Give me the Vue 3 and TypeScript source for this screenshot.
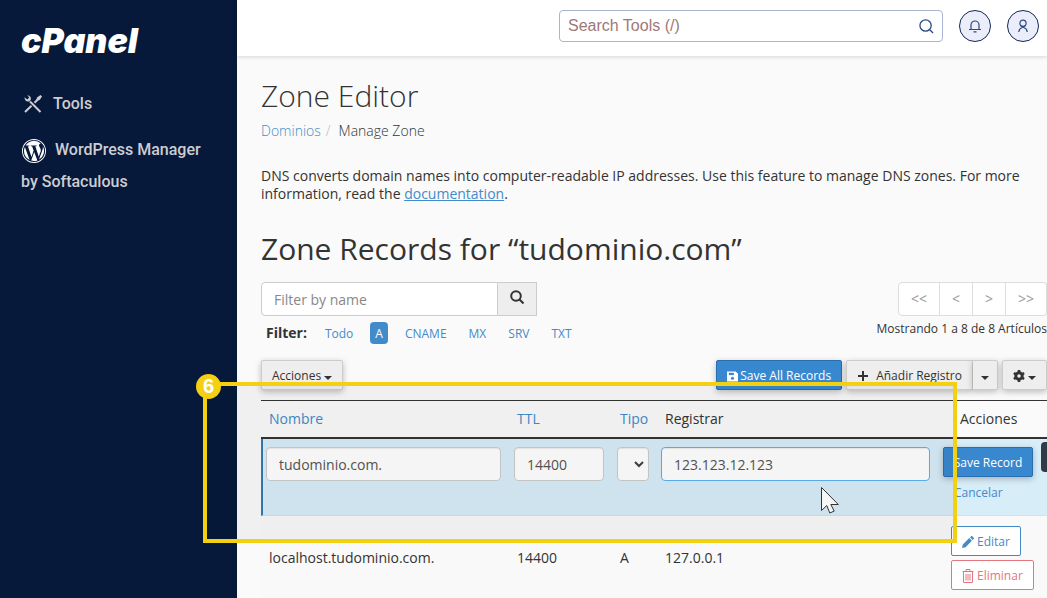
<script setup lang="ts">
import { ref } from 'vue'

const filters: string[] = ['Todo', 'A', 'CNAME', 'MX', 'SRV', 'TXT']
const activeFilter = ref('A')
const pages: string[] = ['<<', '<', '>', '>>']
const search = ref('')
const nameFilter = ref('')
const recordName = ref('tudominio.com.')
const ttl = ref('14400')
const recordType = ref('')
const recordValue = ref('123.123.12.123')
</script>

<template>
  <div class="page">
    <aside class="sidebar">
      <a class="logo" href="#">cPanel</a>
      <nav>
        <a class="nav-item" href="#">
          <svg class="tools-icon" viewBox="0 0 20 20" width="20" height="20" fill="none" stroke="currentColor">
            <path d="M7 7.500 17.500 18" stroke-width="2" />
            <path d="M1.500 3.200c0 3 2 4.800 4.700 4.200l1.600-1.600C8.400 3.500 7 1.300 4.300 1.200l1.900 2.300-1.900 1.900z" fill="currentColor" stroke="none" />
            <path d="M2 18 8.500 11.700M11.500 8.800 14.500 5.800" stroke-width="2" />
            <path d="m13.200 6.200.8-2.700L17.500 1l1.500 1.500-2.400 3.500-2.700.9z" fill="currentColor" stroke="none" />
          </svg>
          <span>Tools</span>
        </a>
        <a class="nav-item wordpress" href="#">
          <svg viewBox="0 0 24 24" width="24" height="24" fill="#fff">
            <path d="M12 0a12 12 0 1 0 0 24 12 12 0 0 0 0-24zm0 .9a11.100 11.100 0 1 1 0 22.200A11.100 11.100 0 0 1 12 .9z" />
            <path d="M2 12a10 10 0 0 0 5.600 9L2.900 7.900A10 10 0 0 0 2 12zm16.800-.5c0-1.200-.4-2.100-.8-2.800-.5-.8-1-1.500-1-2.400 0-.9.7-1.800 1.700-1.800h.1A10 10 0 0 0 3.600 6.500h.7c1 0 2.700-.1 2.700-.1.5 0 .6.7.1.8l-1.200.1 3.600 10.600 2.100-6.400-1.500-4.200-1-.1c-.5 0-.5-.8 0-.8 0 0 1.600.1 2.600.1s2.700-.1 2.700-.1c.5 0 .6.7.1.8l-1.200.1 3.500 10.500 1-3.200c.5-1.300 1-2.200 1-3.100zm-6.600 1.400-3 8.700a10 10 0 0 0 6.200-.2l-.1-.1zm8.600-5.700c0 .3.100.7.100 1.100 0 1.100-.2 2.300-.8 3.800L17 20.600a10 10 0 0 0 3.800-13.400z" />
          </svg>
          <span class="wp-label">WordPress Manager</span> by Softaculous
        </a>
      </nav>
    </aside>

    <main class="main">
      <header class="topbar">
        <div class="tool-search">
          <input v-model="search" type="text" placeholder="Search Tools (/)" aria-label="Search Tools" />
          <svg viewBox="0 0 16 16" width="15" height="15" fill="none" stroke="#294a80" stroke-width="1.400">
            <circle cx="7" cy="7" r="6" /><path d="m11.400 11.400 3.600 3.600" />
          </svg>
        </div>
        <button class="round" aria-label="Notifications">
          <svg viewBox="0 0 14 14" width="14" height="14" fill="none" stroke="#294a80" stroke-width="1.200">
            <path d="M3 10.500V6a4 4 0 0 1 8 0v4.500M1 10.500h12M5.500 12.800h3" />
          </svg>
        </button>
        <button class="round" aria-label="Account">
          <svg viewBox="0 0 14 14" width="14" height="14" fill="none" stroke="#294a80" stroke-width="1.200">
            <circle cx="7" cy="4.200" r="3.100" /><path d="M2.800 13c.2-2.400 1.400-3.600 3-4.200l3.400-2M11.200 13c-.2-2.400-1.400-3.600-3-4.200l-3.400-2" />
          </svg>
        </button>
      </header>

      <section class="content">
        <h1>Zone Editor</h1>
        <div class="breadcrumb"><a href="#">Dominios</a><span class="slash">/</span><span>Manage Zone</span></div>
        <p class="intro">
          DNS converts domain names into computer-readable IP addresses. Use this feature to manage DNS zones. For more
          information, read the <a href="#">documentation</a>.
        </p>
        <h2>Zone Records for “tudominio.com”</h2>

        <div class="row">
          <div>
            <div class="name-filter">
              <input v-model="nameFilter" type="text" placeholder="Filter by name" aria-label="Filter by name" />
              <button aria-label="Search">
                <svg viewBox="0 0 14 14" width="14" height="14" fill="none" stroke="#333" stroke-width="2">
                  <circle cx="6" cy="6" r="4.800" /><path d="m9.500 9.500 4 4" />
                </svg>
              </button>
            </div>
            <div class="filters">
              <strong>Filter:</strong>
              <button
                v-for="f in filters"
                :key="f"
                :class="{ active: f === activeFilter }"
                @click="activeFilter = f"
              >{{ f }}</button>
            </div>
          </div>
          <div class="paging">
            <div class="pages"><button v-for="p in pages" :key="p">{{ p }}</button></div>
            <div class="count">Mostrando 1 a 8 de 8 Artículos</div>
          </div>
        </div>

        <div class="row toolbar">
          <button class="btn">Acciones<i class="caret"></i></button>
          <div class="group">
            <button class="btn primary">
              <svg viewBox="0 0 12 12" width="11" height="12">
                <path d="M0 1h9.500L12 3.500V12H0z" fill="#fff" /><path d="M2 2.500h5.500V5H2z" fill="#3888cf" /><circle cx="6" cy="8.500" r="1.700" fill="#3888cf" />
              </svg>Save All Records
            </button>
            <div class="split">
              <button class="btn add">
                <svg viewBox="0 0 12 12" width="12" height="12" stroke="#333" stroke-width="2"><path d="M6 1v10M1 6h10" /></svg>Añadir Registro
              </button>
              <button class="btn drop" aria-label="Más opciones"><i class="caret"></i></button>
            </div>
            <button class="btn gear" aria-label="Configuración">
              <svg viewBox="0 0 14 14" width="12" height="12">
                <circle cx="7" cy="7" r="3.800" fill="none" stroke="#333" stroke-width="3.400" />
                <path d="M7 0v3M7 11v3M1 3.500l2.600 1.500M10.400 9l2.600 1.500M1 10.500 3.600 9M10.400 5 13 3.500" stroke="#333" stroke-width="3" />
              </svg><i class="caret"></i>
            </button>
          </div>
        </div>

        <table>
          <colgroup><col class="c-name" /><col class="c-ttl" /><col class="c-type" /><col /><col class="c-act" /></colgroup>
          <thead>
            <tr>
              <th><a href="#">Nombre</a></th><th><a href="#">TTL</a></th><th><a href="#">Tipo</a></th>
              <th>Registrar</th><th class="act">Acciones</th>
            </tr>
          </thead>
          <tbody>
            <tr class="editing">
              <td><input v-model="recordName" type="text" aria-label="Nombre" /></td>
              <td><input v-model="ttl" type="text" aria-label="TTL" /></td>
              <td>
                <div class="select">
                  <select v-model="recordType" aria-label="Tipo"><option value=""></option><option>A</option></select>
                  <svg viewBox="0 0 10 7" width="10" height="7" fill="none" stroke="#4b3a4b" stroke-width="2"><path d="m1 1 4 4 4-4" /></svg>
                </div>
              </td>
              <td class="value"><input v-model="recordValue" class="focused" type="text" aria-label="Registrar" /></td>
              <td class="save">
                <button class="btn primary">Save Record</button>
                <a href="#">Cancelar</a>
                <span class="tab"></span>
              </td>
            </tr>
            <tr class="record">
              <td>localhost.tudominio.com.</td><td>14400</td><td>A</td><td>127.0.0.1</td>
              <td>
                <button class="line">
                  <svg viewBox="0 0 12 12" width="12" height="12" fill="currentColor"><path d="m0 12 .8-3.600 6.400-6.300 2.700 2.700-6.300 6.400zM8 1.300 9.200.2c.4-.4.8-.2 1.100.1l1.400 1.400c.4.400.4.800 0 1.200L10.700 4z" /></svg>Editar
                </button>
                <button class="line danger">
                  <svg viewBox="0 0 12 14" width="12" height="14" fill="none" stroke="currentColor"><path d="M.5 2.500h11M4 2.500v-2h4v2M1.500 2.500v11h9v-11M4 5v6.500M6 5v6.500M8 5v6.500" /></svg>Eliminar
                </button>
              </td>
            </tr>
          </tbody>
        </table>
      </section>
    </main>

    <div class="highlight"><span class="step">6</span></div>
    <svg class="pointer" viewBox="0 0 20 29" width="20" height="29">
      <path d="M1.500 1.500v23l5.300-5 3 7.500 4.400-1.900-3.400-6.600h7.500z" fill="#f7f7f7" stroke="#333" stroke-width="1" />
    </svg>
  </div>
</template>

<style>
body {
  margin: 0;
  background: #fafafa;
}
</style>

<style scoped>
* {
  box-sizing: border-box;
}
.page {
  position: relative;
  display: flex;
  min-height: 100vh;
  overflow: hidden;
  font: 14px/20px "Open Sans", sans-serif;
  color: #333;
}
button,
input,
select {
  font: inherit;
  color: inherit;
  margin: 0;
}
button {
  white-space: nowrap;
}
a {
  color: #428bca;
  text-decoration: none;
}
.sidebar {
  flex: 0 0 237px;
  background: #06193b;
  padding: 21px 20px 0 21px;
  font: 500 16px/32px Roboto, sans-serif;
}
.logo {
  display: block;
  font: italic 900 34px/40px Inter, sans-serif;
  color: #fff;
}
.nav-item {
  display: flex;
  align-items: center;
  gap: 10px;
  margin-top: 27px;
  color: #cdcdd0;
}
.tools-icon {
  margin-left: 2px;
}
.nav-item.wordpress {
  display: block;
  margin-top: 14px;
}
.wordpress svg {
  margin: 0 1px;
  vertical-align: middle;
}
.wp-label {
  margin-left: 8px;
}
.main {
  flex: 1;
  min-width: 0;
}
.topbar {
  display: flex;
  justify-content: flex-end;
  align-items: center;
  gap: 16px;
  height: 56px;
  padding: 0 8px 4px 0;
  background: #fff;
  box-shadow: 0 1px 4px rgba(0, 0, 0, 0.15);
}
.tool-search {
  display: flex;
  align-items: center;
  width: 384px;
  height: 32px;
  padding: 0 8px;
  border: 1px solid #a9b6cf;
  border-radius: 4px;
}
.tool-search input {
  flex: 1;
  border: 0;
  padding: 0;
  outline: 0;
  background: none;
  font: 16px/24px "Liberation Sans", sans-serif;
}
.tool-search input::placeholder {
  color: #a07878;
}
.round {
  display: flex;
  align-items: center;
  justify-content: center;
  width: 32px;
  height: 32px;
  padding: 0;
  border: 1px solid #142757;
  border-radius: 50%;
  background: #ebedfa;
}
.content {
  padding: 23px 0 0 24px;
}
h1,
h2 {
  margin: 0;
  font-size: 30px;
  line-height: 33px;
  font-weight: 300;
}
.breadcrumb {
  margin-top: 9px;
  font-weight: 300;
}
.slash {
  padding: 0 8px 0 5px;
  color: #bbb;
}
.intro {
  margin: 26px 0 0;
  line-height: 18px;
}
.intro a {
  text-decoration: underline;
}
h2 {
  margin: 29px 0 17px;
  font-weight: 400;
}
.row {
  display: flex;
  justify-content: space-between;
}
.name-filter {
  display: flex;
  width: 276px;
  height: 34px;
}
.name-filter input {
  flex: 1;
  min-width: 0;
  padding: 1px 12px 0;
  border: 1px solid #ccc;
  border-radius: 4px 0 0 4px;
  background: #fff;
}
.name-filter input::placeholder {
  color: #888;
}
.name-filter button {
  width: 39px;
  padding: 0;
  border: 1px solid #ccc;
  border-left: 0;
  background: #eee;
}
.filters {
  display: flex;
  align-items: center;
  height: 34px;
  padding-left: 5px;
}
.filters strong {
  margin-right: 13px;
  font-weight: 700;
}
.filters button {
  height: 22px;
  padding: 2px 5px 0;
  margin-right: 12px;
  border: 0;
  border-radius: 4px;
  background: none;
  font-size: 12px;
  color: #428bca;
}
.filters .active {
  background: #428bca;
  color: #fff;
}
.paging {
  text-align: right;
}
.pages {
  display: flex;
  justify-content: flex-end;
  height: 34px;
}
.pages button {
  padding: 0 12px;
  border: 1px solid #ddd;
  border-left-width: 0;
  background: #fff;
  color: #999;
}
.pages button:first-child {
  border-left-width: 1px;
  border-radius: 4px 0 0 4px;
}
.pages button:last-child {
  border-radius: 0 4px 4px 0;
}
.count {
  margin-top: 3px;
  font-size: 12px;
}
.toolbar {
  margin: 10px 0;
}
.btn {
  display: flex;
  align-items: center;
  height: 30px;
  padding: 2px 10px 0;
  border: 1px solid #ccc;
  border-radius: 2px;
  background: #eee;
  font-size: 12px;
  box-shadow: 0 2px 6px rgba(0, 0, 0, 0.25);
}
.primary {
  border-color: #2a6eb0;
  background: #3888cf;
  color: #fff;
}
.primary svg {
  margin-right: 2px;
}
.group {
  display: flex;
  gap: 4px;
}
.split {
  display: flex;
}
.add {
  border-radius: 2px 0 0 2px;
}
.add svg {
  margin-right: 7px;
}
.drop {
  padding: 2px 8px 0;
  border-left: 0;
  border-radius: 0 2px 2px 0;
}
.caret {
  margin-left: 3px;
  margin-top: 3px;
  border: 4px solid transparent;
  border-top-color: #333;
  border-bottom: 0;
}
.drop .caret {
  margin-left: 0;
}
table {
  width: 100%;
  table-layout: fixed;
  border-spacing: 0;
  border-top: 1px solid #333;
}
.c-name {
  width: 248px;
}
.c-ttl {
  width: 103px;
}
.c-type {
  width: 45px;
}
.c-act {
  width: 104px;
}
th {
  height: 38px;
  padding: 0 8px;
  border-bottom: 2px solid #333;
  font-weight: 400;
  text-align: left;
}
th.act {
  padding-left: 17px;
}
.editing td {
  height: 77px;
  padding: 8px 8px 0 5px;
  border-bottom: 1px solid #ddd;
  background: #d7edf8;
  vertical-align: top;
}
.editing td:first-child {
  border-left: 2px solid #337ab7;
  padding-left: 3px;
}
.editing td.value {
  padding: 8px 13px 0 4px;
}
.editing td.save {
  position: relative;
  padding: 8px 14px 0 0;
}
.editing input,
.select {
  display: block;
  width: 100%;
  height: 34px;
  padding: 0 12px;
  border: 1px solid #ccc;
  border-radius: 4px;
  background: #fff;
  color: #555;
  box-shadow: inset 0 1px 1px rgba(0, 0, 0, 0.08);
}
.editing .focused {
  border-color: #5ab4f5;
}
.select {
  display: grid;
  align-items: center;
  justify-items: end;
  padding: 0 4px 0 0;
}
.select select,
.select svg {
  grid-area: 1 / 1;
}
.select select {
  width: 100%;
  height: 32px;
  padding: 0;
  border: 0;
  appearance: none;
  background: none;
}
.select svg {
  pointer-events: none;
}
.save .btn {
  width: 100%;
  justify-content: center;
}
.save a {
  display: block;
  margin: 6px 0 0 11px;
  font-size: 12px;
}
.tab {
  position: absolute;
  top: 3px;
  right: 0;
  width: 6px;
  height: 30px;
  border-radius: 4px 0 0 4px;
  background: #343947;
}
.record td {
  height: 82px;
  padding: 10px 8px 8px;
  background: #f9f9f9;
  vertical-align: middle;
}
.line {
  display: flex;
  align-items: center;
  gap: 3px;
  height: 30px;
  padding: 2px 10px 0;
  border: 1px solid #428bca;
  border-radius: 2px;
  background: #fff;
  color: #428bca;
  font-size: 12px;
}
.danger {
  margin-top: 4px;
  border-color: #e2777f;
  color: #e2777f;
}
.highlight {
  position: absolute;
  left: 203px;
  right: 90px;
  top: 382px;
  height: 161px;
  border: 4px solid #f4d013;
  background: rgba(0, 0, 0, 0.04);
  pointer-events: none;
}
.step {
  position: absolute;
  left: -11px;
  top: -12px;
  width: 25px;
  height: 25px;
  border-radius: 50%;
  background: #f4d013;
  color: #fff;
  font: 700 20px/24px "Liberation Sans", sans-serif;
  text-align: center;
}
.pointer {
  position: absolute;
  left: 820px;
  top: 486px;
  pointer-events: none;
}
</style>
